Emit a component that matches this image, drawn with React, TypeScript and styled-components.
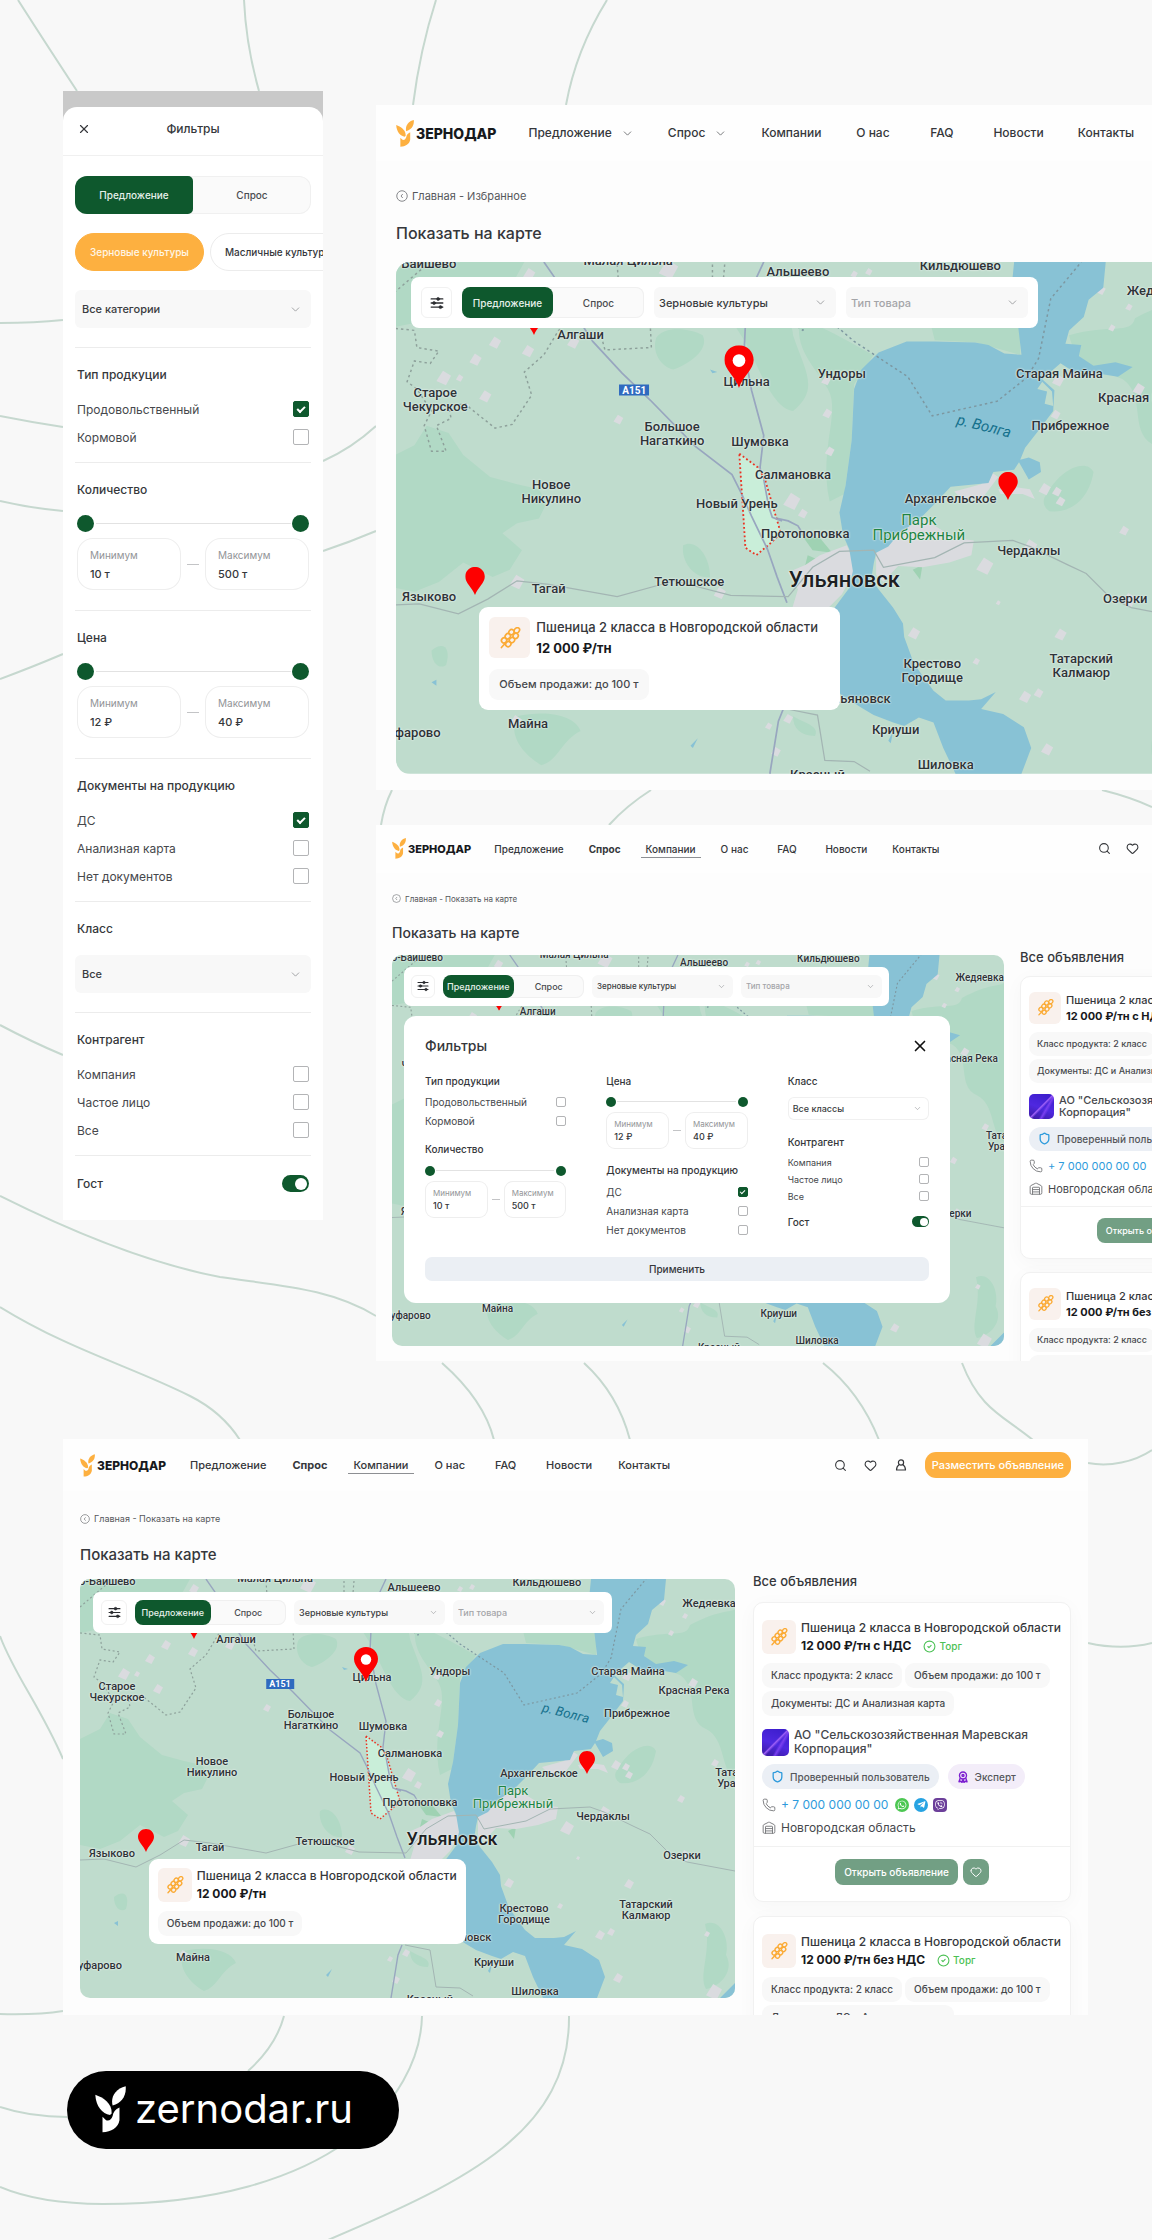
import React from 'react';
import styled, { createGlobalStyle, css, ThemeProvider } from 'styled-components';
import { ChevronDown, CircleCheck, Heart, Phone, Search, Shield, Warehouse, X } from 'lucide-react';
import { FaTelegramPlane, FaViber, FaWhatsapp } from 'react-icons/fa';

/* ---------- size sets for the three desktop mock-ups ---------- */

const large = {
  logoIcon: 18, logoText: 14, logoGap: 2,
  nav: 12, navGap: 34, logoNav: 32, navMin: 35, header: 56, padX: 20, actions: 14,
  crumb: 11, crumbIcon: 12, crumbTop: 27, crumbGap: 19,
  title: 16, titleGap: 19, bottom: 16,
  mapFont: 13, city: 22, park: 15, mapLine: 14, mapRadius: 14,
  barPadX: 10, barPadY: 10, barGap: 10, barTop: 15, barLeft: 15, barRadius: 8,
  ctl: 11, seg: 10, ctlH: 31, selectW: 182, tuneW: 31,
  box: 41, cardTitle: 13, price: 13, priceLine: 21, chip: 11, chipH: 31, chipPad: 10,
  cardPadY: 10, cardPadX: 10, cardW: 361, cardGap: 10, cardTop: 67.4, boxGap: 6,
  side: 13, sideW: 388, sideTop: 26, sideGap: 11, listPad: 8, listTop: 16, listBottom: 11, listGap: 14,
  org: 12, orgLine: 14, orgGap: 12, avatar: 27, badge: 11, footTop: 12, footBottom: 16,
  gridGap: 20, icon: 14,
};

type Sizes = typeof large;

const medium: Sizes = {
  logoIcon: 15, logoText: 12, logoGap: 2,
  nav: 11, navGap: 26, logoNav: 24, navMin: 29, header: 52, padX: 17, actions: 14,
  crumb: 9, crumbIcon: 10, crumbTop: 20, crumbGap: 18,
  title: 15, titleGap: 14, bottom: 17,
  mapFont: 11, city: 18, park: 13, mapLine: 11, mapRadius: 10,
  barPadX: 8, barPadY: 8, barGap: 8, barTop: 13, barLeft: 13, barRadius: 7,
  ctl: 9, seg: 9, ctlH: 25, selectW: 151, tuneW: 26,
  box: 34, cardTitle: 12, price: 12, priceLine: 18, chip: 10, chipH: 25, chipPad: 9,
  cardPadY: 8, cardPadX: 9, cardW: 317, cardGap: 8, cardTop: 66.8, boxGap: 5,
  side: 13, sideW: 318, sideTop: 26, sideGap: 11, listPad: 8, listTop: 16, listBottom: 11, listGap: 14,
  org: 12, orgLine: 14, orgGap: 12, avatar: 27, badge: 10, footTop: 12, footBottom: 16,
  gridGap: 18, icon: 13,
};

const small: Sizes = {
  logoIcon: 14, logoText: 11, logoGap: 2,
  nav: 10, navGap: 25, logoNav: 23, navMin: 27, header: 48, padX: 16, actions: 12,
  crumb: 8, crumbIcon: 9, crumbTop: 18, crumbGap: 16,
  title: 14, titleGap: 12, bottom: 15,
  mapFont: 10, city: 17, park: 12, mapLine: 11, mapRadius: 10,
  barPadX: 7, barPadY: 8, barGap: 8, barTop: 12, barLeft: 12, barRadius: 7,
  ctl: 8, seg: 9, ctlH: 23, selectW: 141, tuneW: 24,
  box: 32, cardTitle: 11, price: 11, priceLine: 16, chip: 9, chipH: 24, chipPad: 8,
  cardPadY: 8, cardPadX: 8, cardW: 296, cardGap: 8, cardTop: 66.8, boxGap: 5,
  side: 13, sideW: 297, sideTop: 24, sideGap: 9, listPad: 8, listTop: 15, listBottom: 9, listGap: 13,
  org: 11, orgLine: 12, orgGap: 11, avatar: 25, badge: 10, footTop: 11, footBottom: 15,
  gridGap: 16, icon: 12,
};

declare module 'styled-components' {
  export interface DefaultTheme extends Sizes {}
}

const GREEN = '#0e582d';
const ORANGE = '#fdb040';
const INK = '#35373b';
const FONT = `Inter, 'Noto Sans', 'Liberation Sans', sans-serif`;

const GlobalStyle = createGlobalStyle`
  *, *::before, *::after { box-sizing: border-box; }
  body { margin: 0; background: #f8f8f8; color: ${INK}; font-family: ${FONT}; }
  button, input, select { font-family: inherit; color: inherit; margin: 0; }
  a { color: inherit; text-decoration: none; }
  h2, h3, p, ul { margin: 0; padding: 0; font-weight: 500; list-style: none; }
`;

/* ---------- board ---------- */

const Board = styled.main`
  position: relative;
  overflow: hidden;
  padding: 91px 0 90px;
`;

const Waves = styled.svg`
  position: absolute;
  inset: 0;
  width: 100%;
  height: 100%;
  fill: none;
  stroke: #c6d8cf;
  stroke-width: 2;
`;

const TopRow = styled.div`
  position: relative;
  display: flex;
  align-items: flex-start;
  gap: 53px;
  padding-left: 63px;
`;

const Stack = styled.div`
  flex: 1;
  min-width: 0;
  display: flex;
  flex-direction: column;
  gap: 35px;
  padding-top: 14px;
`;

const BottomRow = styled.div`
  position: relative;
  padding: 78px 64px 0 63px;
`;

const Panel = styled.section<{ $content?: number }>`
  overflow: hidden;
  background: #fdfdfd;
  & > * { min-width: ${p => (p.$content ? `${p.$content}px` : '0')}; }
`;

const SiteLink = styled.a`
  position: relative;
  display: inline-flex;
  align-items: center;
  gap: 9px;
  height: 78px;
  margin: 56px 0 0 67px;
  padding: 0 46px 2px 28px;
  border-radius: 39px;
  background: #000;
  color: #fff;
  font-size: 40px;
  line-height: 48px;
`;

/* ---------- shared drawings ---------- */

const LogoMark = ({ width, color }: { width: number; color: string }) => (
  <svg width={width} height={Math.round(width * 1.5)} viewBox="0 0 95 142" fill={color} aria-hidden="true">
    <path d="M1 26C24 34 53 52 51 83L46 88C22 84 3 62 1 26Z" />
    <path d="M94 0C97 30 80 52 54 59C47 34 62 8 94 0Z" />
    <path d="M75 65V104C71 127 50 140 23 141V93L34 104C44 107 50 102 54 91C56 79 62 71 75 65Z" />
  </svg>
);

const Wheat = ({ size }: { size: number }) => (
  <svg width={size} height={size} viewBox="0 0 24 24" fill="none" stroke="#fbab36" strokeWidth="1.8" aria-hidden="true">
    <g transform="rotate(42 12 12)">
      <ellipse cx="12" cy="0.8" rx="2.6" ry="3.2" />
      <ellipse cx="8.9" cy="6.2" rx="2.7" ry="3" />
      <ellipse cx="15.1" cy="6.2" rx="2.7" ry="3" />
      <ellipse cx="8.9" cy="12.2" rx="2.7" ry="3" />
      <ellipse cx="15.1" cy="12.2" rx="2.7" ry="3" />
      <ellipse cx="8.9" cy="18.2" rx="2.7" ry="3" />
      <ellipse cx="15.1" cy="18.2" rx="2.7" ry="3" />
      <path d="M12 20V26" strokeLinecap="round" />
    </g>
  </svg>
);

const Tune = ({ size }: { size: number }) => (
  <svg width={size} height={size} viewBox="0 0 24 24" fill="none" stroke="#2b2d31" strokeWidth="2.2" strokeLinecap="round" aria-hidden="true">
    <path d="M2 5H22M2 12H22M2 19H22" />
    <g fill="#2b2d31" strokeWidth="1">
      <circle cx="14" cy="5" r="2.6" />
      <circle cx="7" cy="12" r="2.6" />
      <circle cx="18" cy="19" r="2.6" />
    </g>
  </svg>
);

const Person = ({ size }: { size: number }) => (
  <svg width={size} height={size} viewBox="0 0 24 24" fill="none" stroke="currentColor" strokeWidth="2.4" strokeLinejoin="round" aria-hidden="true">
    <circle cx="12" cy="7" r="5.2" />
    <path d="M8.5 11C5.5 13 3 17 3 22H21C21 17 18.5 13 15.5 11" />
  </svg>
);

const Rosette = ({ size }: { size: number }) => (
  <svg width={size} height={size} viewBox="0 0 24 24" fill="none" stroke="#7c1fd0" strokeWidth="2.8" strokeLinejoin="round" aria-hidden="true">
    <circle cx="12" cy="9" r="7" />
    <circle cx="12" cy="9" r="2" />
    <path d="M6.5 14L4 21.5L8 20.5L10 23L12 17L14 23L16 20.5L20 21.5L17.5 14" />
  </svg>
);

const BackDot = ({ size }: { size: number }) => (
  <svg width={size} height={size} viewBox="0 0 24 24" fill="none" stroke="#7b7d80" strokeWidth="1.8" aria-hidden="true">
    <circle cx="12" cy="12" r="10.5" />
    <path d="M13.5 8L10 12L13.5 16" />
  </svg>
);

/* ---------- header ---------- */

const Header = styled.header`
  display: flex;
  align-items: center;
  height: ${p => p.theme.header}px;
  padding: 0 ${p => p.theme.padX}px;
  background: #fefefe;
`;

const Logo = styled.a`
  display: flex;
  align-items: center;
  gap: ${p => p.theme.logoGap}px;
  font-size: ${p => p.theme.logoText}px;
  font-weight: 800;
  color: #17191c;
`;

const Nav = styled.nav`
  display: flex;
  align-items: center;
  gap: ${p => p.theme.navGap}px;
  margin-left: ${p => p.theme.logoNav}px;
`;

const NavLink = styled.a<{ $bold?: boolean; $current?: boolean }>`
  position: relative;
  display: flex;
  align-items: center;
  justify-content: center;
  gap: 9px;
  min-width: ${p => p.theme.navMin}px;
  font-size: ${p => p.theme.nav}px;
  line-height: 16px;
  font-weight: ${p => (p.$bold ? 700 : 500)};
  white-space: nowrap;
  ${p => p.$current && css`
    &::after {
      content: '';
      position: absolute;
      inset: auto -5px -1px;
      height: 1px;
      background: #8d8f93;
    }
  `}
`;

const Actions = styled.div`
  display: flex;
  align-items: center;
  gap: ${p => p.theme.actions}px;
  margin-left: auto;
`;

const IconButton = styled.button`
  display: grid;
  place-items: center;
  width: 16px;
  height: 24px;
  padding: 0;
  border: 0;
  background: none;
`;

const PostButton = styled.button`
  height: ${p => p.theme.chipH + 1}px;
  margin-left: 2px;
  padding: 0 7px;
  border: 0;
  border-radius: 11px;
  background: ${ORANGE};
  color: #fff;
  font-size: ${p => p.theme.nav}px;
  font-weight: 500;
  white-space: nowrap;
`;

const NAV = ['Предложение', 'Спрос', 'Компании', 'О нас', 'FAQ', 'Новости', 'Контакты'];

function SiteHeader({ sizes, menus }: { sizes: Sizes; menus?: boolean }) {
  return (
    <Header>
      <Logo href="#"><LogoMark width={sizes.logoIcon} color={ORANGE} />ЗЕРНОДАР</Logo>
      <Nav>
        {NAV.map((name, i) => (
          <NavLink key={name} href="#" $bold={!menus && i === 1} $current={!menus && i === 2}>
            {name}
            {menus && i < 2 && <ChevronDown size={13} strokeWidth={1.6} color="#66686b" />}
          </NavLink>
        ))}
      </Nav>
      {!menus && (
        <Actions>
          <IconButton aria-label="Поиск"><Search size={13} strokeWidth={2} /></IconButton>
          <IconButton aria-label="Избранное"><Heart size={13} strokeWidth={2} /></IconButton>
          <IconButton aria-label="Профиль"><Person size={12} /></IconButton>
          <PostButton>Разместить объявление</PostButton>
        </Actions>
      )}
    </Header>
  );
}

const Crumbs = styled.nav`
  display: flex;
  align-items: center;
  gap: 4px;
  padding: ${p => p.theme.crumbTop}px ${p => p.theme.padX}px ${p => p.theme.crumbGap}px;
  font-size: ${p => p.theme.crumb}px;
  line-height: 16px;
  color: #55575b;
`;

const Content = styled.div<{ $side?: boolean }>`
  display: grid;
  grid-template-columns: minmax(0, 1fr) ${p => (p.$side ? `${p.theme.sideW}px` : '')};
  gap: ${p => p.theme.gridGap}px;
  padding: 0 ${p => p.theme.padX}px ${p => p.theme.bottom}px;
`;

const PageTitle = styled.h2`
  margin-bottom: ${p => p.theme.titleGap}px;
  font-size: ${p => p.theme.title}px;
  line-height: 20px;
`;

/* ---------- map ---------- */

const MapFrame = styled.div`
  position: relative;
  overflow: hidden;
  border-radius: ${p => p.theme.mapRadius}px;
`;

const Canvas = styled.div<{ $cropped?: boolean }>`
  position: relative;
  aspect-ratio: 655 / 419;
  ${p => p.$cropped && css`margin-left: -6px;`}
`;

const Terrain = styled.svg`
  display: block;
  width: 100%;
  height: 100%;
`;

const Place = styled.span<{ $x: number; $y: number; $kind?: 'city' | 'park' | 'river' | 'road' }>`
  position: absolute;
  left: ${p => p.$x / 6.55}%;
  top: ${p => p.$y / 4.19}%;
  transform: translate(-50%, -50%);
  font-family: Roboto, 'Noto Sans', sans-serif;
  font-size: ${p => p.theme.mapFont}px;
  line-height: ${p => p.theme.mapLine}px;
  font-weight: 500;
  text-align: center;
  white-space: pre;
  color: #2e3338;
  text-shadow: 0 0 2px #e4efe9, 0 0 2px #e4efe9, 0 0 1px #e4efe9;
  ${p => p.$kind === 'city' && css`font-size: ${p.theme.city}px; line-height: 24px; color: #1d2023;`}
  ${p => p.$kind === 'park' && css`font-size: ${p.theme.park}px; line-height: ${p.theme.park}px; font-weight: 400; color: #1f8444;`}
  ${p => p.$kind === 'river' && css`
    font-size: ${p.theme.park}px;
    font-weight: 400;
    font-style: italic;
    color: #14708c;
    text-shadow: none;
    transform: translate(-50%, -50%) rotate(14deg);
  `}
  ${p => p.$kind === 'road' && css`
    padding: 0 3px;
    font-size: ${p.theme.chip - 1}px;
    line-height: ${p.theme.chip}px;
    font-weight: 700;
    background: #2f6abf;
    color: #fff;
    text-shadow: none;
  `}
`;

const Pin = styled.svg<{ $x: number; $y: number; $w: number }>`
  position: absolute;
  left: ${p => p.$x / 6.55}%;
  top: ${p => p.$y / 4.19}%;
  width: ${p => p.$w / 6.55}%;
  transform: translate(-50%, -100%);
  fill: #fe0000;
`;

const PLACES: [string, number, number, ('city' | 'park' | 'river' | 'road')?][] = [
  ['Старо-Баишево', 15, 2], ['Малая Цильна', 195, -1], ['Альшеево', 334, 8], ['Кильдюшево', 467, 3],
  ['Жедяевка', 629, 24], ['Алгаши', 156, 60], ['Цильна', 292, 98], ['Ундоры', 370, 92],
  ['Старая Майна', 548, 92], ['Красная Река', 614, 111], ['Старое\nЧекурское', 37, 113],
  ['Большое\nНагаткино', 231, 141], ['Шумовка', 303, 147], ['Прибрежное', 557, 134],
  ['Салмановка', 330, 174], ['Новое\nНикулино', 132, 188], ['Новый Урень', 284, 198],
  ['Архангельское', 459, 194], ['Протопоповка', 340, 223], ['Парк\nПрибрежный', 433, 218, 'park'],
  ['Чердаклы', 523, 237], ['Татарский\nУрайкино', 662, 199], ['Ульяновск', 372, 260, 'city'],
  ['Тетюшское', 245, 262], ['Тагай', 130, 268], ['Языково', 32, 274], ['Озерки', 602, 276],
  ['Татарский\nКалмаюр', 566, 331], ['Крестово\nГородище', 444, 335], ['Новоульяновск', 371, 358],
  ['Криуши', 414, 383], ['Майна', 113, 378], ['уфарово', 20, 386], ['Шиловка', 455, 412],
  ['Красный', 350, 420], ['р. Волга', 486, 134, 'river'], ['A151', 200, 105, 'road'],
];

const SPECKS: [number, number, number][] = [
  [114, 10, 5], [86, 66, 5], [70, 80, 5], [113, 73, 5], [44, 95, 6], [78, 110, 5], [150, 66, 5],
  [228, 6, 8], [380, 10, 3], [392, 8, 3], [187, 129, 4], [357, 97, 4], [358, 124, 4], [360, 155, 4],
  [329, 196, 7], [338, 206, 4], [104, 262, 6], [270, 271, 5], [103, 376, 5], [582, 23, 4], [605, 37, 3],
  [591, 54, 3], [560, 91, 4], [613, 104, 5], [545, 125, 4], [547, 97, 5], [536, 186, 5], [546, 188, 4],
  [549, 196, 4], [601, 220, 4], [481, 190, 4], [487, 249, 7], [524, 233, 6], [605, 277, 6], [549, 305, 5],
  [520, 356, 5], [531, 353, 4], [538, 399, 5], [627, 355, 3], [634, 413, 8], [316, 401, 4], [310, 380, 3],
  [326, 374, 4], [498, 279, 2], [480, 327, 3], [57, 95, 3], [62, 118, 3], [429, 304, 5], [635, 184, 4],
];

/* x, y of the tip, and how far the pin moves on the cropped map */
const PINS = [[66, 273, 4], [507, 195, -1], [114, 60, 4]];

function RegionMap({ cropped }: { cropped?: boolean }) {
  return (
    <Canvas $cropped={cropped}>
      <Terrain viewBox="0 0 655 419" preserveAspectRatio="none" role="img" aria-label="Карта Ульяновской области">
        <rect width="655" height="419" fill="#bfdccd" />
        <g fill="#b1d9c5">
          <path d="M0 160L20 150L30 134L48 140L60 158L82 176L104 182L122 186L128 198L122 210L104 214L92 222L108 236L98 252L84 258L60 246L40 262L20 270L0 266Z" />
          <path d="M218 62C224 52 246 54 256 60C262 72 244 84 232 88C222 86 214 74 218 62Z" />
          <path d="M262 20C290 12 330 40 330 60C340 90 352 104 330 122C312 120 300 80 290 64Z" />
          <path d="M336 46C370 60 390 74 396 76L380 100L378 146L372 190L360 196C350 150 372 120 356 100C348 86 330 70 336 46Z" />
          <path d="M556 60C590 50 606 60 610 46C640 30 650 34 655 30V200C640 190 646 160 626 150C604 140 620 110 600 96C570 84 560 78 556 60Z" />
          <path d="M538 190C548 170 570 160 576 172C572 196 556 206 540 204C534 200 534 194 538 190Z" />
          <path d="M625 345C640 338 650 360 646 376C655 392 640 408 626 410C618 396 632 372 625 345Z" />
          <path d="M104 372C130 366 152 372 156 384C140 392 138 408 124 412C110 404 96 388 104 372Z" />
          <path d="M240 232C250 226 262 240 262 258C250 260 238 246 240 232Z" />
          <path d="M0 0H110L100 18L60 30L20 50L0 54Z" />
          <path d="M480 40L516 50L516 76L480 66L446 64L440 40Z" />
          <path d="M34 318C44 310 50 316 46 330C40 334 34 328 34 318Z" />
          <path d="M330 372C340 378 352 380 348 388C336 388 330 382 330 372Z" />
        </g>
        <g fill="#9fd2b3">
          <path d="M336 222L352 226L362 238L346 236Z" />
          <path d="M342 240L356 246L350 252L340 248Z" />
          <path d="M414 216L424 206L424 222L412 228Z" />
          <path d="M428 252L436 248L434 260Z" />
        </g>
        <g fill="#dadbdf">
          <path d="M326 254L340 248L352 240L374 232L382 250L370 272L352 290L328 288L334 268Z" />
          <path d="M398 238L416 222L434 208L446 216L462 226L478 228L476 240L458 246L436 250L416 249L404 262L398 256Z" />
          <path d="M462 188L484 182L492 172L498 176L486 192L470 196Z" />
          <path d="M498 186L510 184L524 186L528 194L518 190L500 190Z" />
          {SPECKS.map(([x, y, r]) => (
            <path key={`${x}-${y}`} d={`M${x - r} ${y + r * 0.4}L${x - r * 0.1} ${y - r}L${x + r} ${y - r * 0.3}L${x + r * 0.3} ${y + r}Z`} />
          ))}
        </g>
        <path fill="#88c2d5" d="M511 0L509 20L514 50L517 76L503 75L490 68L479 66L446 65L423 65L400 74L386 88L380 104L378 146L373 183L368 205L371 224L376 235L379 253L376 267L364 283L350 330L369 354L386 365L396 371L412 377L421 380L433 373L445 377L453 398L463 419H517L525 398L519 381L502 370L484 366L496 352L484 358L474 359L455 359L445 351L429 329L421 307L420 296L412 283L400 268L394 260L396 247L398 238L408 233L417 222L433 211L447 197L459 184L490 181L494 172L511 170L515 164L523 178L533 172L532 164L523 160L516 162L520 152L531 138L543 122L544 105L534 96L549 83L560 90L572 90L596 94L608 86L594 82L576 85L564 77L566 68L553 67L556 56L568 45L572 31L584 21L586 0Z" />
        <path fill="#88c2d5" d="M640 419L655 404V419ZM412 384L410 394L408 392ZM34 344L38 342L38 347ZM246 396L252 390L248 398ZM262 88L268 90L264 91Z" />
        <path fill="#bfdccd" d="M534 98L542 106L543 118L536 116L538 106L530 104Z" />
        <g fill="none" stroke="#98a6bf" strokeWidth="1.4">
          <path d="M126 0L135 13L150 40L166 65L190 91L213 113L250 151L280 174L288 190L296 208L309 235L317 258L325 279" />
          <path d="M306 0L292 30L290 72L296 105L306 142L303 168L306 190L310 200L313 209L326 212L334 216L340 226" />
          <path d="M322 366L318 376L311 419" />
        </g>
        <g fill="none" stroke="#a3b5b3" strokeWidth="1">
          <path d="M0 281L24 280L56 288L80 276L104 261L130 264L186 274L233 261L279 273L326 274L346 250L368 237L396 236L404 250L446 242L470 230L510 228L524 233L555 248L570 255L590 275L607 283L655 292" />
          <path d="M325 366L350 371L356 408L380 409L393 417" />
        </g>
        <g fill="none" stroke="#8ea19b" strokeWidth="1.2" strokeDasharray="2 2.5">
          <path d="M0 28L28 4M0 54L20 56L22 70L40 73L33 83L20 81L14 98L22 104L34 122L28 134L34 155L46 155L38 134L50 128L48 118L62 116L66 120L86 136L100 133L116 109L110 90L126 76L138 56L158 40" />
          <path d="M173 61L176 72L214 70L213 50M186 2L188 30M264 2L264 30M274 2L272 26" />
          <path d="M330 50L338 56L344 50M366 53L380 65L424 94L444 126L497 114L521 95L531 79L541 30L566 0" stroke="#7d97a0" />
        </g>
        <path d="M286 157L301 168L307 178L320 222L313 229L300 240L291 234Z" fill="#c9eed9" stroke="#ea3323" strokeWidth="1.5" strokeDasharray="1.5 2" />
        <path d="M288 190L296 208L309 235M306 178L310 200L313 209L321 212" fill="none" stroke="#98a6bf" strokeWidth="1.4" />
      </Terrain>
      {PLACES.map(([name, x, y, kind]) => (
        <Place key={name} $x={x} $y={y} $kind={kind}>{name}</Place>
      ))}
      {PINS.map(([x, y, shift]) => (
        <Pin key={x} $x={cropped ? x + shift : x} $y={y} $w={16} viewBox="0 0 16 23" aria-hidden="true">
          <path d="M8 0C3.4 0 0 3.5 0 8C0 13 5.5 16.5 8 23C10.5 16.5 16 13 16 8C16 3.5 12.6 0 8 0Z" />
        </Pin>
      ))}
      <Pin $x={286} $y={103} $w={24} viewBox="0 0 24 35" aria-hidden="true">
        <path d="M12 0C5 0 0 5.3 0 12C0 20 9 25 12 35C15 25 24 20 24 12C24 5.300 19 0 12 0Z" />
        <circle cx="12" cy="12.500" r="5.200" fill="#fff" />
      </Pin>
    </Canvas>
  );
}

/* ---------- controls ---------- */

const Toolbar = styled.div`
  position: absolute;
  top: ${p => p.theme.barTop}px;
  left: ${p => p.theme.barLeft}px;
  display: flex;
  gap: ${p => p.theme.barGap}px;
  padding: ${p => p.theme.barPadY}px ${p => p.theme.barPadX}px;
  border-radius: ${p => p.theme.barRadius}px;
  background: #fff;
`;

const TuneButton = styled.button`
  display: grid;
  place-items: center;
  width: ${p => p.theme.tuneW}px;
  height: ${p => p.theme.ctlH}px;
  padding: 0;
  border: 1px solid #f1f1f1;
  border-radius: 6px;
  background: #fff;
`;

const Segment = styled.div<{ $phone?: boolean }>`
  display: grid;
  grid-template-columns: 1fr 1fr;
  width: ${p => (p.$phone ? '100%' : `${p.theme.selectW}px`)};
  height: ${p => (p.$phone ? 38 : p.theme.ctlH)}px;
  border-radius: ${p => (p.$phone ? 12 : 8)}px;
  background: #fafafa;
  box-shadow: inset 0 0 0 1px #f0f0f0;
`;

const SegmentButton = styled.button<{ $on?: boolean; $phone?: boolean }>`
  padding: 0;
  border: 0;
  border-radius: ${p => (p.$phone ? '12px 5px 5px 12px' : '8px')};
  background: ${p => (p.$on ? GREEN : 'none')};
  color: ${p => (p.$on ? '#e6f0ea' : '#4a4c50')};
  font-size: ${p => (p.$phone ? 10 : p.theme.seg)}px;
  font-weight: 500;
`;

const SelectBox = styled.label<{ $width?: string; $height: number; $outline?: boolean }>`
  position: relative;
  display: flex;
  align-items: center;
  width: ${p => p.$width ?? '100%'};
  height: ${p => p.$height}px;
  border-radius: 6px;
  background: ${p => (p.$outline ? '#fff' : '#f8f8f8')};
  box-shadow: ${p => (p.$outline ? 'inset 0 0 0 1px #f0f0f0' : 'none')};
  svg { position: absolute; right: ${p => (p.$height > 30 ? 9 : 7)}px; pointer-events: none; }
`;

const Select = styled.select<{ $size: number; $muted?: boolean; $pad?: number }>`
  appearance: none;
  width: 100%;
  height: 100%;
  padding: 0 20px 0 ${p => p.$pad ?? 5}px;
  border: 0;
  background: none;
  font-size: ${p => p.$size}px;
  font-weight: 500;
  color: ${p => (p.$muted ? '#a4a5a8' : '#3a3c40')};
`;

function DropDown(props: { label: string; value: string; size: number; height: number; width?: string; muted?: boolean; outline?: boolean; pad?: number }) {
  return (
    <SelectBox $width={props.width} $height={props.height} $outline={props.outline}>
      <Select aria-label={props.label} $size={props.size} $muted={props.muted} $pad={props.pad}>
        <option>{props.value}</option>
      </Select>
      <ChevronDown size={props.height > 30 ? 13 : 9} strokeWidth={1.5} color="#8f9194" />
    </SelectBox>
  );
}

function MapToolbar({ sizes }: { sizes: Sizes }) {
  return (
    <Toolbar>
      <TuneButton aria-label="Фильтры"><Tune size={sizes.icon} /></TuneButton>
      <Segment>
        <SegmentButton $on aria-pressed="true">Предложение</SegmentButton>
        <SegmentButton aria-pressed="false">Спрос</SegmentButton>
      </Segment>
      <DropDown label="Культура" value="Зерновые культуры" size={sizes.ctl} height={sizes.ctlH} width={`${sizes.selectW}px`} />
      <DropDown label="Тип товара" value="Тип товара" muted size={sizes.ctl} height={sizes.ctlH} width={`${sizes.selectW}px`} />
    </Toolbar>
  );
}

const CheckRow = styled.label<{ $h: number; $font: number }>`
  display: flex;
  align-items: center;
  justify-content: space-between;
  height: ${p => p.$h}px;
  font-size: ${p => p.$font}px;
  color: #46484c;
`;

const Check = styled.input.attrs({ type: 'checkbox' })<{ $size: number }>`
  appearance: none;
  display: grid;
  place-items: center;
  width: ${p => p.$size}px;
  height: ${p => p.$size}px;
  border: 1px solid #b3b4b6;
  border-radius: 2px;
  background: #fff;
  &:checked { background: ${GREEN}; border-color: ${GREEN}; }
  &:checked::after {
    content: '';
    width: 60%;
    height: 35%;
    margin-top: -15%;
    border: solid #fff;
    border-width: ${p => (p.$size > 12 ? '0 0 2px 2px' : '0 0 1px 1px')};
    transform: rotate(-45deg);
  }
`;

const Switch = styled.input.attrs({ type: 'checkbox', role: 'switch' })<{ $size: number }>`
  appearance: none;
  display: flex;
  justify-content: flex-end;
  align-items: center;
  width: ${p => p.$size}px;
  height: ${p => Math.round(p.$size * 0.62)}px;
  padding: 0 ${p => (p.$size > 20 ? 2 : 1)}px;
  border-radius: 99px;
  background: ${GREEN};
  &::after {
    content: '';
    width: ${p => Math.round(p.$size * 0.46)}px;
    height: ${p => Math.round(p.$size * 0.46)}px;
    border-radius: 50%;
    background: #fff;
  }
`;

const Slider = styled.div<{ $knob: number }>`
  display: grid;
  align-items: center;
  height: ${p => p.$knob}px;
  background: linear-gradient(#e2e2e2, #e2e2e2) center / 84% 1px no-repeat;
`;

const Range = styled.input.attrs({ type: 'range' })<{ $knob: number }>`
  grid-area: 1 / 1;
  appearance: none;
  width: 100%;
  height: ${p => p.$knob}px;
  background: none;
  pointer-events: none;
  &::-webkit-slider-thumb {
    appearance: none;
    width: ${p => p.$knob}px;
    height: ${p => p.$knob}px;
    border-radius: 50%;
    background: ${GREEN};
    pointer-events: auto;
  }
`;

const Bounds = styled.div<{ $gap: number }>`
  display: grid;
  grid-template-columns: 1fr auto 1fr;
  align-items: center;
  gap: ${p => p.$gap}px;
  color: #c3c4c6;
  &::before { content: ''; grid-area: 1 / 2; width: ${p => p.$gap * 2}px; height: 1px; background: currentColor; }
`;

const Bound = styled.label<{ $big?: boolean }>`
  display: flex;
  flex-direction: column;
  justify-content: center;
  gap: ${p => (p.$big ? 3 : 1)}px;
  height: ${p => (p.$big ? 52 : 37)}px;
  padding: 0 ${p => (p.$big ? 13 : 8)}px;
  border-radius: ${p => (p.$big ? 16 : 9)}px;
  background: #fff;
  box-shadow: inset 0 0 0 1px #eeeeee;
  font-size: ${p => (p.$big ? 10 : 8)}px;
  line-height: ${p => (p.$big ? 16 : 12)}px;
  color: #929497;
`;

const BoundInput = styled.input.attrs({ type: 'text' })<{ $big?: boolean }>`
  width: 100%;
  padding: 0;
  border: 0;
  background: none;
  font-size: ${p => (p.$big ? 11 : 9)}px;
  line-height: ${p => (p.$big ? 16 : 12)}px;
  font-weight: 500;
  color: ${INK};
`;

const RangeBox = styled.div<{ $gap: number }>`
  display: grid;
  gap: ${p => p.$gap}px;
`;

function RangeFilter({ name, min, max, big }: { name: string; min: string; max: string; big?: boolean }) {
  const knob = big ? 17 : 10;
  return (
    <RangeBox $gap={big ? 6 : 5}>
      <Slider $knob={knob}>
        <Range $knob={knob} aria-label={`${name}: от`} defaultValue={0} />
        <Range $knob={knob} aria-label={`${name}: до`} defaultValue={100} />
      </Slider>
      <Bounds $gap={big ? 6 : 4}>
        <Bound $big={big}>Минимум<BoundInput $big={big} defaultValue={min} /></Bound>
        <Bound $big={big}>Максимум<BoundInput $big={big} defaultValue={max} /></Bound>
      </Bounds>
    </RangeBox>
  );
}

/* ---------- phone filter sheet ---------- */

const PhoneScreen = styled.section`
  flex: none;
  width: 260px;
  padding-top: 16px;
  background: #c9c9c9;
`;

const Sheet = styled.div`
  border-radius: 14px 14px 0 0;
  background: #fff;
`;

const SheetHeader = styled.header`
  display: grid;
  grid-template-columns: 12px 1fr 12px;
  align-items: center;
  height: 49px;
  padding: 0 14px 4px;
  border-bottom: 1px solid #f0f0f0;
  text-align: center;
`;

const CloseButton = styled.button`
  display: grid;
  padding: 0;
  border: 0;
  background: none;
`;

const SheetTitle = styled.h2`
  font-size: 12px;
  line-height: 16px;
`;

const SheetBody = styled.div`
  display: grid;
  gap: 19px;
  padding: 20px 0 19px 12px;
  overflow: hidden;
`;

const Inset = styled.div`
  padding-right: 12px;
`;

const Chips = styled.div`
  display: flex;
  gap: 6px;
`;

const PhoneChip = styled.button<{ $on?: boolean }>`
  flex: none;
  height: 38px;
  padding: 0 14px;
  border: 1px solid ${p => (p.$on ? ORANGE : '#ececec')};
  border-radius: 19px;
  background: ${p => (p.$on ? ORANGE : '#fff')};
  color: ${p => (p.$on ? '#fff6e6' : INK)};
  font-size: 10px;
  font-weight: 500;
`;

const Group = styled.section<{ $bottom?: number }>`
  margin: 0 12px;
  padding: 19px 2px ${p => p.$bottom ?? 11}px;
  border-top: 1px solid #ececec;
`;

const GroupTitle = styled.h3<{ $gap: number }>`
  margin-bottom: ${p => p.$gap}px;
  font-size: 12px;
  line-height: 16px;
`;

const Widen = styled.div`
  margin: 0 -2px;
`;

const SwitchRow = styled.label<{ $font: number; $h: number }>`
  display: flex;
  align-items: center;
  justify-content: space-between;
  height: ${p => p.$h}px;
  font-size: ${p => p.$font}px;
  font-weight: 500;
`;

function PhoneFilters() {
  const rows = (items: string[], checked?: number) =>
    items.map((name, i) => (
      <CheckRow key={name} $h={28} $font={12}>{name}<Check $size={16} defaultChecked={i === checked} /></CheckRow>
    ));
  return (
    <PhoneScreen>
      <Sheet>
        <SheetHeader>
          <CloseButton aria-label="Закрыть"><X size={14} strokeWidth={2} /></CloseButton>
          <SheetTitle>Фильтры</SheetTitle>
        </SheetHeader>
        <SheetBody>
          <Inset>
            <Segment $phone>
              <SegmentButton $phone $on aria-pressed="true">Предложение</SegmentButton>
              <SegmentButton $phone aria-pressed="false">Спрос</SegmentButton>
            </Segment>
          </Inset>
          <Chips>
            <PhoneChip $on>Зерновые культуры</PhoneChip>
            <PhoneChip>Масличные культуры</PhoneChip>
          </Chips>
          <Inset><DropDown label="Категория" value="Все категории" size={11} height={38} pad={7} /></Inset>
        </SheetBody>
        <Group><GroupTitle $gap={12}>Тип продкуции</GroupTitle>{rows(['Продовольственный', 'Кормовой'], 0)}</Group>
        <Group $bottom={20}><GroupTitle $gap={17}>Количество</GroupTitle><RangeFilter big name="Количество" min="10 т" max="500 т" /></Group>
        <Group $bottom={20}><GroupTitle $gap={17}>Цена</GroupTitle><RangeFilter big name="Цена" min="12 ₽" max="40 ₽" /></Group>
        <Group><GroupTitle $gap={12}>Документы на продукцию</GroupTitle>{rows(['ДС', 'Анализная карта', 'Нет документов'], 0)}</Group>
        <Group $bottom={19}>
          <GroupTitle $gap={18}>Класс</GroupTitle>
          <Widen><DropDown label="Класс" value="Все" size={11} height={38} pad={7} /></Widen>
        </Group>
        <Group><GroupTitle $gap={12}>Контрагент</GroupTitle>{rows(['Компания', 'Частое лицо', 'Все'])}</Group>
        <Group $bottom={28}><SwitchRow $h={17} $font={12}>Гост<Switch $size={27} defaultChecked /></SwitchRow></Group>
      </Sheet>
    </PhoneScreen>
  );
}

/* ---------- offer pieces ---------- */

const Offer = styled.article`
  position: absolute;
  left: 10.5%;
  top: ${p => p.theme.cardTop}%;
  display: grid;
  gap: ${p => p.theme.cardGap}px;
  justify-items: start;
  width: ${p => p.theme.cardW}px;
  padding: ${p => p.theme.cardPadY}px ${p => p.theme.cardPadX}px;
  border-radius: 9px;
  background: #fff;
`;

const OfferHead = styled.div`
  display: flex;
  align-items: center;
  gap: ${p => p.theme.boxGap}px;
`;

const CropBox = styled.span`
  flex: none;
  display: grid;
  place-items: center;
  width: ${p => p.theme.box}px;
  height: ${p => p.theme.box}px;
  border-radius: 6px;
  background: #f9f1ed;
`;

const OfferTitle = styled.h3`
  font-size: ${p => p.theme.cardTitle}px;
  line-height: ${p => p.theme.priceLine}px;
  white-space: nowrap;
`;

const Price = styled.p`
  display: flex;
  align-items: center;
  gap: 12px;
  font-size: ${p => p.theme.price}px;
  line-height: ${p => p.theme.priceLine}px;
  font-weight: 700;
  color: #17191c;
`;

const Deal = styled.span`
  display: flex;
  align-items: center;
  gap: 3px;
  font-size: 10px;
  font-weight: 500;
  color: #4cc155;
`;

const Tag = styled.li`
  height: ${p => p.theme.chipH}px;
  padding: 0 ${p => p.theme.chipPad}px;
  border-radius: 9px;
  background: #f8f8f8;
  font-size: ${p => p.theme.chip}px;
  line-height: ${p => p.theme.chipH}px;
  white-space: nowrap;
  color: #46484c;
`;

const Tags = styled.ul`
  display: flex;
  flex-wrap: wrap;
  gap: 3px;
  margin-top: 8px;
`;

function OfferHeading({ sizes, price, deal }: { sizes: Sizes; price: string; deal?: boolean }) {
  return (
    <OfferHead>
      <CropBox><Wheat size={Math.round(sizes.box * 0.54)} /></CropBox>
      <div>
        <OfferTitle>Пшеница 2 класса в Новгородской области</OfferTitle>
        <Price>{price}{deal && <Deal><CircleCheck size={13} strokeWidth={2} />Торг</Deal>}</Price>
      </div>
    </OfferHead>
  );
}

function MapOffer({ sizes }: { sizes: Sizes }) {
  return (
    <Offer>
      <OfferHeading sizes={sizes} price="12 000 ₽/тн" />
      <ul><Tag>Объем продажи: до 100 т</Tag></ul>
    </Offer>
  );
}

/* ---------- side list ---------- */

const Side = styled.aside`
  contain: size;
  padding-top: ${p => p.theme.sideTop}px;
`;

const SideTitle = styled.h2`
  margin-bottom: ${p => p.theme.sideGap}px;
  font-size: ${p => p.theme.side}px;
  line-height: 20px;
`;

const Listing = styled.article`
  margin-bottom: ${p => p.theme.listGap}px;
  border: 1px solid #f1f1f1;
  border-radius: 10px;
  background: #fff;
  box-shadow: 0 4px 20px rgba(0, 0, 0, 0.03);
`;

const ListingBody = styled.div`
  padding: ${p => p.theme.listTop}px ${p => p.theme.listPad}px ${p => p.theme.listBottom}px;
`;

const Company = styled.div`
  display: flex;
  align-items: center;
  gap: 5px;
  margin-top: ${p => p.theme.orgGap}px;
  font-size: ${p => p.theme.org}px;
  line-height: ${p => p.theme.orgLine}px;
  color: #46484c;
`;

const Avatar = styled.span`
  flex: none;
  width: ${p => p.theme.avatar}px;
  height: ${p => p.theme.avatar}px;
  border-radius: 5px;
  background:
    linear-gradient(135deg, transparent 46%, #9a5cf5 50%, transparent 56%),
    linear-gradient(120deg, transparent 60%, #7a3ff0 66%, transparent 74%),
    linear-gradient(200deg, #3a1cc9, #4f28e0 55%, #3b1a9e);
`;

const Badges = styled.div`
  display: flex;
  gap: 9px;
  margin-top: 8px;
`;

const Badge = styled.span<{ $tone: string }>`
  display: flex;
  align-items: center;
  gap: 6px;
  height: ${p => p.theme.chipH}px;
  padding: 0 9px;
  border-radius: 13px;
  background: ${p => p.$tone};
  font-size: ${p => p.theme.badge}px;
  font-weight: 500;
  white-space: nowrap;
  color: #55575b;
`;

const InfoLine = styled.div`
  display: flex;
  align-items: center;
  gap: 5px;
  height: 15px;
  margin-top: 8px;
  font-size: ${p => p.theme.org}px;
  color: #46484c;
`;

const PhoneLink = styled.a`
  margin-right: 2px;
  color: #2e9bdc;
`;

const Messenger = styled.a<{ $tone: string; $square?: boolean }>`
  display: grid;
  place-items: center;
  width: 14px;
  height: 14px;
  border-radius: ${p => (p.$square ? 4 : 7)}px;
  background: ${p => p.$tone};
  color: #fff;
`;

const ListingFoot = styled.footer`
  display: flex;
  justify-content: center;
  gap: 5px;
  padding: ${p => p.theme.footTop}px 0 ${p => p.theme.footBottom}px;
  border-top: 1px solid #f1f1f1;
`;

const OpenButton = styled.button`
  height: ${p => p.theme.chipH + 1}px;
  padding: 0 9px;
  border: 0;
  border-radius: 8px;
  background: #729f84;
  color: #fff;
  font-size: ${p => p.theme.chip}px;
  font-weight: 500;
`;

const LikeButton = styled(OpenButton)`
  display: grid;
  place-items: center;
  width: 26px;
  padding: 0;
`;

function ListingCard({ sizes, price }: { sizes: Sizes; price: string }) {
  return (
    <Listing>
      <ListingBody>
        <OfferHeading sizes={sizes} price={price} deal />
        <Tags>
          <Tag>Класс продукта: 2 класс</Tag>
          <Tag>Объем продажи: до 100 т</Tag>
          <Tag>Документы: ДС и Анализная карта</Tag>
        </Tags>
        <Company><Avatar /><p>АО "Сельскозозяйственная Маревская<br />Корпорация"</p></Company>
        <Badges>
          <Badge $tone="#ebeff5"><Shield size={13} strokeWidth={2.4} color="#2e9bdc" />Проверенный пользователь</Badge>
          <Badge $tone="#f3edf9"><Rosette size={12} />Эксперт</Badge>
        </Badges>
        <InfoLine>
          <Phone size={14} strokeWidth={1.6} color="#77797c" />
          <PhoneLink href="tel:+70000000000">+ 7 000 000 00 00</PhoneLink>
          <Messenger href="#" aria-label="WhatsApp" $tone="#4cc752"><FaWhatsapp size={10} /></Messenger>
          <Messenger href="#" aria-label="Telegram" $tone="#27a3e2"><FaTelegramPlane size={9} /></Messenger>
          <Messenger href="#" aria-label="Viber" $tone="#6c3f9a" $square><FaViber size={10} /></Messenger>
        </InfoLine>
        <InfoLine><Warehouse size={14} strokeWidth={1.6} color="#77797c" />Новгородская область</InfoLine>
      </ListingBody>
      <ListingFoot>
        <OpenButton>Открыть объявление</OpenButton>
        <LikeButton aria-label="В избранное"><Heart size={12} strokeWidth={2} /></LikeButton>
      </ListingFoot>
    </Listing>
  );
}

function SideList({ sizes }: { sizes: Sizes }) {
  return (
    <Side>
      <SideTitle>Все объявления</SideTitle>
      <ListingCard sizes={sizes} price="12 000 ₽/тн с НДС" />
      <ListingCard sizes={sizes} price="12 000 ₽/тн без НДС" />
    </Side>
  );
}

/* ---------- filter dialog over the map ---------- */

const Dialog = styled.section`
  position: absolute;
  top: 61px;
  left: 12px;
  right: 54px;
  padding: 20px 21px 22px;
  border-radius: 12px;
  background: #fff;
`;

const DialogHead = styled.header`
  display: flex;
  align-items: center;
  justify-content: space-between;
  margin-bottom: 17px;
`;

const DialogTitle = styled.h2`
  font-size: 14px;
  line-height: 20px;
`;

const Columns = styled.div`
  display: grid;
  grid-template-columns: repeat(3, 1fr);
  column-gap: 40px;
`;

const FilterBlock = styled.div<{ $next?: number }>`
  margin-top: ${p => p.$next ?? 0}px;
`;

const BlockTitle = styled.h3<{ $gap: number }>`
  margin-bottom: ${p => p.$gap}px;
  font-size: 10px;
  line-height: 16px;
`;

const ApplyButton = styled.button`
  display: block;
  width: 100%;
  height: 24px;
  margin-top: 17px;
  border: 0;
  border-radius: 7px;
  background: #ebeff4;
  font-size: 10px;
  font-weight: 500;
`;

function FilterDialog() {
  const rows = (items: string[], font: number, h: number, checked?: number) =>
    items.map((name, i) => (
      <CheckRow key={name} $h={h} $font={font}>{name}<Check $size={10} defaultChecked={i === checked} /></CheckRow>
    ));
  return (
    <Dialog role="dialog" aria-label="Фильтры">
      <DialogHead>
        <DialogTitle>Фильтры</DialogTitle>
        <CloseButton aria-label="Закрыть"><X size={18} strokeWidth={2.2} color="#111" /></CloseButton>
      </DialogHead>
      <Columns>
        <div>
          <FilterBlock><BlockTitle $gap={4}>Тип продукции</BlockTitle>{rows(['Продовольственный', 'Кормовой'], 10, 19)}</FilterBlock>
          <FilterBlock $next={10}><BlockTitle $gap={9}>Количество</BlockTitle><RangeFilter name="Количество" min="10 т" max="500 т" /></FilterBlock>
        </div>
        <div>
          <FilterBlock><BlockTitle $gap={8}>Цена</BlockTitle><RangeFilter name="Цена" min="12 ₽" max="40 ₽" /></FilterBlock>
          <FilterBlock $next={13}><BlockTitle $gap={5}>Документы на продукцию</BlockTitle>{rows(['ДС', 'Анализная карта', 'Нет документов'], 10, 19, 0)}</FilterBlock>
        </div>
        <div>
          <FilterBlock><BlockTitle $gap={8}>Класс</BlockTitle><DropDown outline label="Класс" value="Все классы" size={9} height={23} /></FilterBlock>
          <FilterBlock $next={14}><BlockTitle $gap={4}>Контрагент</BlockTitle>{rows(['Компания', 'Частое лицо', 'Все'], 9, 17)}</FilterBlock>
          <FilterBlock $next={9}><SwitchRow $h={16} $font={10}>Гост<Switch $size={17} defaultChecked /></SwitchRow></FilterBlock>
        </div>
      </Columns>
      <ApplyButton>Применить</ApplyButton>
    </Dialog>
  );
}

/* ---------- desktop mock-ups ---------- */

function DesktopScreen(props: { sizes: Sizes; crumb: string; menus?: boolean; side?: boolean; dialog?: boolean; content?: number }) {
  const { sizes } = props;
  return (
    <ThemeProvider theme={sizes}>
      <Panel $content={props.content}>
        <SiteHeader sizes={sizes} menus={props.menus} />
        <Crumbs aria-label="Навигация"><BackDot size={sizes.crumbIcon} /><a href="#">{props.crumb}</a></Crumbs>
        <Content $side={props.side}>
          <div>
            <PageTitle>Показать на карте</PageTitle>
            <MapFrame>
              <RegionMap cropped={props.menus} />
              <MapToolbar sizes={sizes} />
              {props.dialog ? <FilterDialog /> : <MapOffer sizes={sizes} />}
            </MapFrame>
          </div>
          {props.side && <SideList sizes={sizes} />}
        </Content>
      </Panel>
    </ThemeProvider>
  );
}

const WAVES = [
  'M18 0Q50 50 77 91', 'M244 0Q246 45 259 91', 'M436 0Q420 50 413 105', 'M607 0Q576 50 566 105',
  'M0 323Q35 323 63 320', 'M0 416Q30 422 63 427', 'M0 501Q30 508 63 511', 'M0 679Q30 668 63 654',
  'M0 1025Q32 1042 63 1055', 'M323 461Q352 448 376 426', 'M323 551Q350 542 376 531',
  'M392 790Q384 806 381 825', 'M651 790Q626 806 609 825', 'M1102 790Q1130 797 1152 807',
  'M0 1196C60 1226 140 1262 220 1277C280 1286 330 1288 376 1316', 'M442 1363Q484 1400 494 1440',
  'M0 1307C70 1350 130 1366 190 1396Q222 1412 240 1440', 'M584 1363Q618 1394 630 1440',
  'M823 1363Q860 1392 879 1440', 'M962 1363C980 1410 1004 1416 1033 1440',
  'M1088 1463C1110 1467 1134 1462 1152 1450', 'M1088 1643C1110 1648 1132 1648 1152 1643',
  'M0 1636C14 1674 40 1706 63 1759', 'M0 2014Q38 2015 63 2011', 'M284 2016Q276 2046 248 2071',
  'M422 2016C420 2100 330 2204 103 2204Q40 2204 0 2187', 'M569 2016C570 2130 470 2180 328 2240',
  'M0 2107Q30 2117 67 2117',
];

export default function App() {
  return (
    <Board>
      <GlobalStyle />
      <Waves viewBox="0 0 1152 2240" preserveAspectRatio="xMidYMin slice" aria-hidden="true">
        {WAVES.map(d => <path key={d} d={d} />)}
      </Waves>
      <ThemeProvider theme={medium}>
        <TopRow>
          <PhoneFilters />
          <Stack>
            <DesktopScreen sizes={large} crumb="Главная - Избранное" menus content={834} />
            <DesktopScreen sizes={small} crumb="Главная - Показать на карте" side dialog content={957} />
          </Stack>
        </TopRow>
        <BottomRow>
          <DesktopScreen sizes={medium} crumb="Главная - Показать на карте" side />
        </BottomRow>
        <SiteLink href="https://zernodar.ru"><LogoMark width={31} color="#fff" />zernodar.ru</SiteLink>
      </ThemeProvider>
    </Board>
  );
}
